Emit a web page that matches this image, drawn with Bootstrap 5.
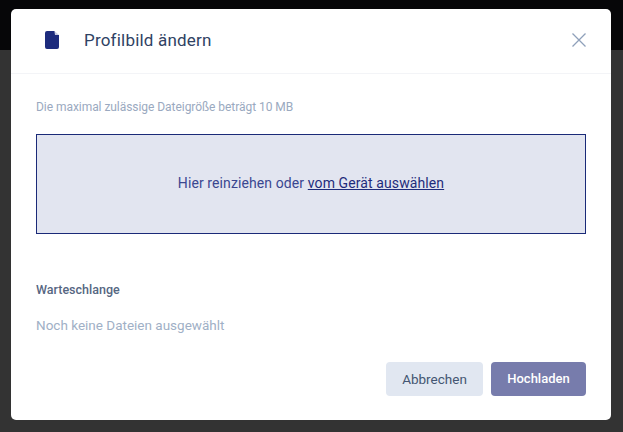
<!DOCTYPE html>
<html lang="de">
<head>
  <meta charset="UTF-8">
  <meta name="viewport" content="width=device-width, initial-scale=1.0">
  <title>Profilbild ändern</title>
  <link href="https://cdn.jsdelivr.net/npm/bootstrap@5.3.2/dist/css/bootstrap.min.css" rel="stylesheet">
  <style>
    html, body { height: 100%; overflow: hidden; }
    body { font-family: Roboto, "Liberation Sans", sans-serif; background: #333; }
    .page-topbar { height: 50px; background: #060608; }
    .dialog-layer { padding: 9px 0 0 11px; }
    .upload-dialog { width: 600px; height: 411px; background: #fff; border: 0; border-radius: 5px; }
    .upload-dialog .modal-header { height: 65px; padding: 0 24px 0 34px; border-bottom: 1px solid #f3f4f7; }
    .upload-dialog .modal-header svg { margin-bottom: 2px; }
    .upload-dialog .modal-title { margin-left: 25px; font-size: 17px; font-weight: 400; color: #2f4263; letter-spacing: .2px; }
    .upload-close { color: #8fa0ba; }
    .upload-body { padding: 25px 25px 0; }
    .size-hint { font-size: 12px; line-height: 16px; color: #9aa9c0; margin-bottom: 19px; letter-spacing: -.05px; }
    .drop-zone { height: 100px; padding-bottom: 2px; background: #e2e5f0; border: 1px solid #1a2a78; font-size: 14px; letter-spacing: .1px; color: #3a4790; }
    .drop-zone a { color: #1f2c7c; }
    .queue-title { margin-top: 48px; font-size: 12.5px; line-height: 16px; font-weight: 500; color: #566782; }
    .queue-empty { margin-top: 18px; font-size: 13.5px; line-height: 18px; color: #9fb0c6; }
    .upload-dialog .modal-footer { padding: 0 25px 24px; border: 0; gap: 8px; }
    .upload-dialog .modal-footer > .btn { margin: 0; height: 34px; padding: 0; font-size: 13.5px; border: 0; border-radius: 4px; }
    .upload-dialog .modal-footer > .btn-abort { width: 97px; background: #e1e7f1; color: #445672; }
    .upload-dialog .modal-footer > .btn-send { width: 95px; background: #777cac; color: #fff; font-weight: 500; font-size: 13px; }
  </style>
</head>
<body class="position-relative">
  <div class="page-topbar"></div>

  <div class="dialog-layer position-absolute top-0 start-0 w-100 d-flex">
    <div class="modal-content upload-dialog d-flex flex-column">
      <div class="modal-header d-flex align-items-center">
        <svg width="14" height="18" viewBox="0 0 14 18" aria-hidden="true">
          <path fill="#1d2b7d" d="M2 0H9.500L10 4H14V16A2 2 0 0 1 12 18H2A2 2 0 0 1 0 16V2A2 2 0 0 1 2 0Z"/>
          <path fill="#c9cde3" d="M10 0.500 14 4H10Z"/>
        </svg>
        <h5 class="modal-title">Profilbild ändern</h5>
        <svg class="upload-close ms-auto" width="16" height="16" viewBox="0 0 16 16" aria-label="Schließen">
          <path d="M1.500 1.500 14.500 14.500M14.500 1.500 1.500 14.500" fill="none" stroke="currentColor" stroke-width="1.300"/>
        </svg>
      </div>
      <div class="upload-body flex-grow-1">
        <p class="size-hint">Die maximal zulässige Dateigröße beträgt 10 MB</p>
        <div class="drop-zone d-flex align-items-center justify-content-center">
          <span>Hier reinziehen oder <a href="#">vom Gerät auswählen</a></span>
        </div>
        <div class="queue-title">Warteschlange</div>
        <div class="queue-empty">Noch keine Dateien ausgewählt</div>
      </div>
      <div class="modal-footer">
        <button type="button" class="btn btn-abort">Abbrechen</button>
        <button type="button" class="btn btn-send">Hochladen</button>
      </div>
    </div>
  </div>

  <script src="https://cdn.jsdelivr.net/npm/bootstrap@5.3.2/dist/js/bootstrap.bundle.min.js"></script>
</body>
</html>
